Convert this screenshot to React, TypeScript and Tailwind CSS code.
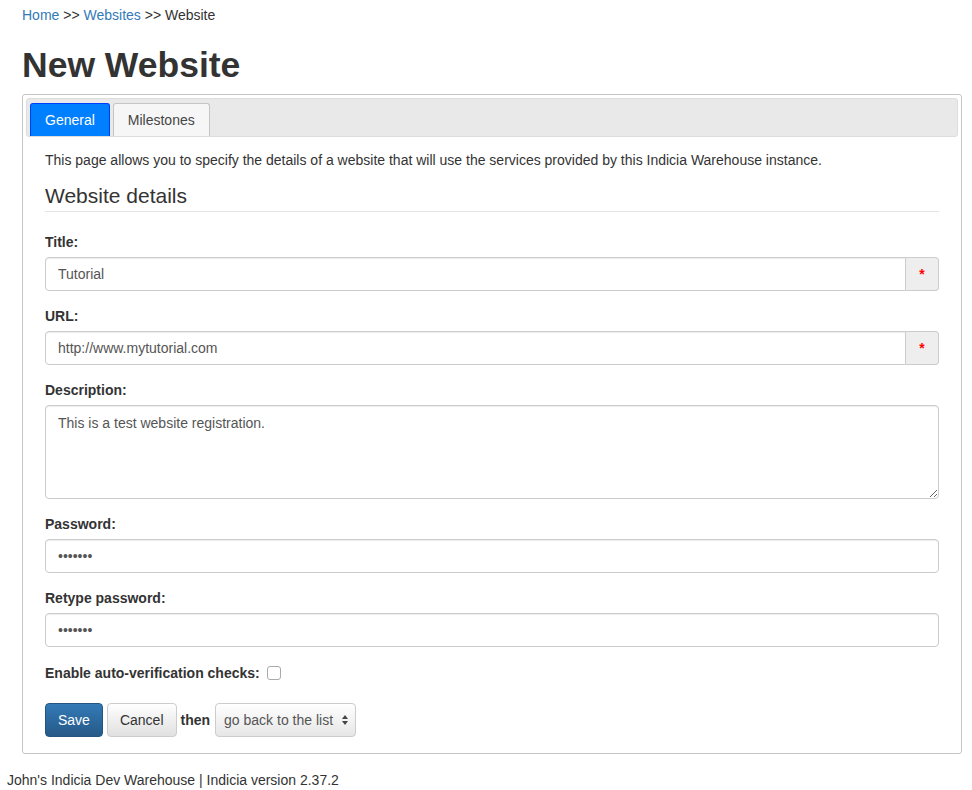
import React from 'react';

const font = { fontFamily: '"Liberation Sans", Arial, Helvetica, sans-serif' };

const inputCls =
  'block w-full h-[34px] border border-[#ccc] rounded-[4px] px-3 text-[14px] text-[#555] shadow-[inset_0_1px_1px_rgba(0,0,0,0.075)] outline-none';

function RequiredInput({ value }: { value: string }) {
  return (
    <div className="flex h-[34px]">
      <input
        readOnly
        value={value}
        className="flex-1 h-full border border-[#ccc] rounded-l-[4px] px-3 text-[14px] text-[#555] shadow-[inset_0_1px_1px_rgba(0,0,0,0.075)] outline-none"
      />
      <span className="w-[33px] h-full flex items-center justify-center border border-l-0 border-[#ccc] rounded-r-[4px] bg-[#eee] text-[#f00] text-[14px] font-bold">
        *
      </span>
    </div>
  );
}

function Label({ children }: { children: React.ReactNode }) {
  return <label className="block text-[14px] leading-[20px] font-bold text-[#333] mb-[5px]">{children}</label>;
}

export default function App() {
  return (
    <div style={font} className="bg-white text-[#333] min-h-[790px] px-[7px] pt-[6px]">
      <div className="ml-[15px] mr-[3px]">
        <div className="text-[14px] leading-[18px]">
          <a className="text-[#337ab7]">Home</a> &gt;&gt; <a className="text-[#337ab7]">Websites</a> &gt;&gt; Website
        </div>
        <h1 className="text-[35.5px] font-bold leading-[40px] mt-[21px] mb-[9px] text-[#333]">New Website</h1>

        <div className="border border-[#c5c5c5] rounded-[3px] p-[3px]">
          <div className="flex gap-[3px] bg-[#e9e9e9] border border-[#ddd] rounded-[3px] pt-[4px] px-[3px]">
            <div className="h-[33px] px-[14px] flex items-center bg-[#007fff] border border-[#003eff] border-b-0 rounded-t-[3px] text-white text-[14px]">
              General
            </div>
            <div className="h-[33px] px-[14px] flex items-center bg-[#f6f6f6] border border-[#c5c5c5] border-b-0 rounded-t-[3px] text-[#454545] text-[14px]">
              Milestones
            </div>
          </div>

          <div className="px-[19px] pt-[13px] pb-[13px]">
            <p className="text-[14px] leading-[20px]">
              This page allows you to specify the details of a website that will use the services provided by this Indicia Warehouse instance.
            </p>
            <h2 className="text-[21px] leading-[24px] mt-[14px] pb-[3px] border-b border-[#e5e5e5]">Website details</h2>

            <div className="mt-[20px]">
              <Label>Title:</Label>
              <RequiredInput value="Tutorial" />
            </div>
            <div className="mt-[15px]">
              <Label>URL:</Label>
              <RequiredInput value="http://www.mytutorial.com" />
            </div>
            <div className="mt-[15px]">
              <Label>Description:</Label>
              <textarea
                readOnly
                value="This is a test website registration."
                className="block w-full h-[94px] border border-[#ccc] rounded-[4px] px-3 py-[7px] text-[14px] text-[#555] shadow-[inset_0_1px_1px_rgba(0,0,0,0.075)] outline-none resize-y"
              />
            </div>
            <div className="mt-[15px]">
              <Label>Password:</Label>
              <input readOnly type="password" value="1234567" className={inputCls} />
            </div>
            <div className="mt-[15px]">
              <Label>Retype password:</Label>
              <input readOnly type="password" value="1234567" className={inputCls} />
            </div>
            <div className="mt-[16px] h-[20px] flex items-center gap-[7px]">
              <span className="text-[14px] font-bold">Enable auto-verification checks:</span>
              <span className="w-[14px] h-[14px] border border-[#aaa] rounded-[3px] bg-white" />
            </div>

            <div className="mt-[20px] flex items-center gap-[4px]">
              <button className="h-[34px] px-[12px] rounded-[4px] border border-[#245580] bg-gradient-to-b from-[#337ab7] to-[#265a88] text-white text-[14px]">
                Save
              </button>
              <button className="h-[34px] px-[12px] rounded-[4px] border border-[#ccc] bg-gradient-to-b from-white to-[#e0e0e0] text-[#333] text-[14px]">
                Cancel
              </button>
              <span className="text-[14px] font-bold">then</span>
              <div className="h-[34px] w-[141px] ml-[1px] flex items-center justify-between pl-[8px] pr-[6px] rounded-[4px] border border-[#ccc] bg-gradient-to-b from-white to-[#e6e6e6] text-[14px] text-[#555]">
                <span>go back to the list</span>
                <svg width="8" height="12" viewBox="0 0 8 12">
                  <path d="M4 1 L7 5 L1 5 Z" fill="#444" />
                  <path d="M4 11 L7 7 L1 7 Z" fill="#444" />
                </svg>
              </div>
            </div>
          </div>
        </div>
      </div>
      <div className="text-[14px] leading-[20px] mt-[16px]">John's Indicia Dev Warehouse | Indicia version 2.37.2</div>
    </div>
  );
}
